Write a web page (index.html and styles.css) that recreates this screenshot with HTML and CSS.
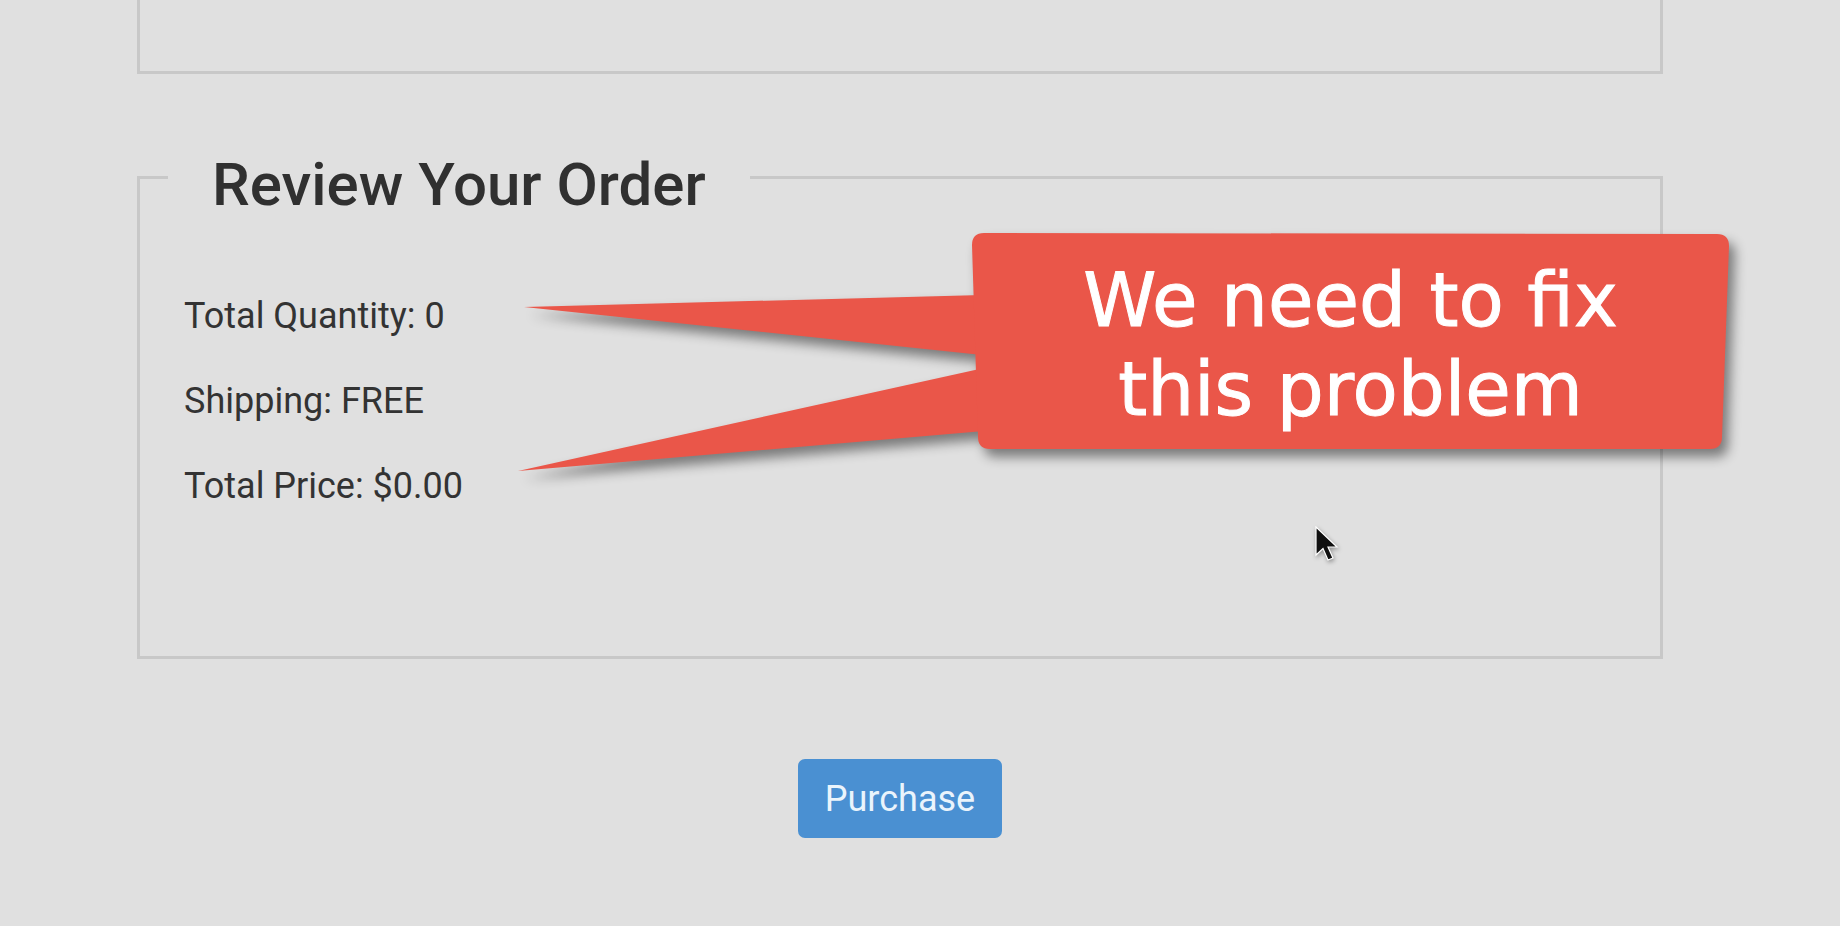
FILE: index.html
```html
<!DOCTYPE html>
<html lang="en">
<head>
<meta charset="utf-8">
<title>Review Your Order</title>
<link rel="stylesheet" href="styles.css">
</head>
<body>
<main class="page">
  <div class="prev-box"></div>
  <fieldset class="review">
    <legend class="review-title">Review Your Order</legend>
    <div class="summary">
      <div class="summary-row">Total Quantity: 0</div>
      <div class="summary-row">Shipping: FREE</div>
      <div class="summary-row">Total Price: $0.00</div>
    </div>
  </fieldset>
  <div class="actions">
    <button class="btn-purchase" type="button">Purchase</button>
  </div>
</main>

<div class="callout">
  <svg class="callout-shape" viewBox="0 0 1250 270" width="1250" height="270" aria-hidden="true">
    <polygon points="24,87 482,75 482,135" />
    <polygon points="18,251 484,148 484,211" />
    <path d="M484 13 L1217 14 Q1229 14 1229 26 L1222 217 Q1222 229 1210 229 L490 229 Q478 229 478 217 L472 25 Q472 13 484 13 Z" />
  </svg>
  <div class="callout-text">We need to fix<br>this problem</div>
</div>

<svg class="cursor" viewBox="0 0 26 38" width="26" height="38" aria-hidden="true">
  <path d="M2 1 L2 29 L9 22.5 L14 34 L19 32 L14 21 L23 21 Z" />
</svg>
</body>
</html>
```

FILE: styles.css
```css
html, body {
  margin: 0;
  padding: 0;
}

body {
  background: #e0e0e0;
  font-family: Roboto, "Liberation Sans", Arial, sans-serif;
  color: #333333;
  width: 1840px;
  height: 926px;
  overflow: hidden;
}

.page {
  width: 1526px;
  margin-left: 137px;
}

.prev-box {
  height: 71px;
  border: 3px solid #c8c8c8;
  border-top: none;
}

.review {
  margin: 60px 0 0 0;
  border: 3px solid #c8c8c8;
  padding: 0 0 0 28px;
  min-width: 0;
}

.review-title {
  font-size: 60px;
  font-weight: 500;
  line-height: 72px;
  padding: 15px 44px 0 44px;
  color: #303030;
}

.summary {
  padding: 53px 0 127px 16px;
}

.summary-row {
  font-size: 36px;
  line-height: 85px;
}

.actions {
  display: flex;
  justify-content: center;
  margin-top: 100px;
}

.btn-purchase {
  width: 204px;
  height: 79px;
  border: none;
  border-radius: 7px;
  background: #4a90d2;
  color: #eaf4fc;
  font-family: Roboto, "Liberation Sans", Arial, sans-serif;
  font-size: 36px;
  padding: 0;
}

.callout {
  position: absolute;
  left: 500px;
  top: 220px;
  width: 1250px;
  height: 270px;
}

.callout-shape {
  position: absolute;
  left: 0;
  top: 0;
  fill: #ea5649;
  filter: drop-shadow(6px 8px 6px rgba(0, 0, 0, 0.45));
}

.callout-text {
  position: absolute;
  left: 472px;
  top: 13px;
  width: 757px;
  height: 216px;
  display: flex;
  align-items: center;
  justify-content: center;
  text-align: center;
  color: #ffffff;
  font-family: "DejaVu Sans", sans-serif;
  font-size: 74px;
  line-height: 89px;
  padding-top: 8px;
  box-sizing: border-box;
  -webkit-text-stroke: 1px #ffffff;
}

.cursor {
  position: absolute;
  left: 1314px;
  top: 526px;
  fill: #111111;
  stroke: #ffffff;
  stroke-width: 1.2;
  filter: drop-shadow(1px 2px 2px rgba(0, 0, 0, 0.35));
}
```
